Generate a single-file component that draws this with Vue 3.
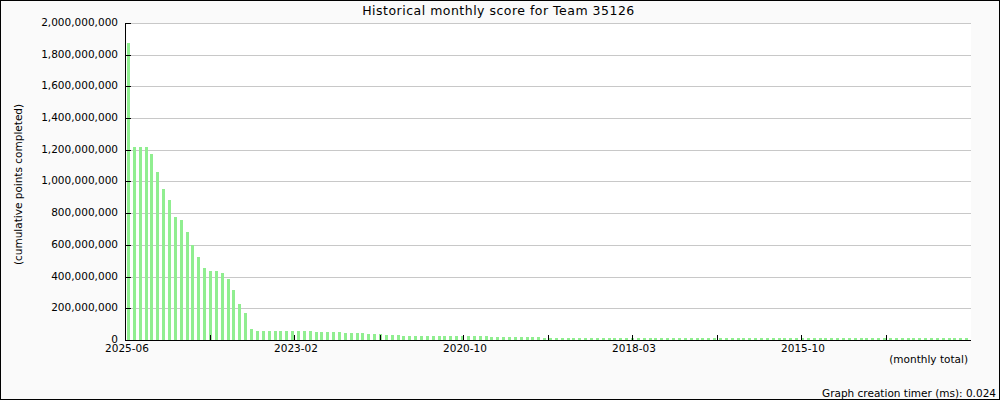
<script setup>
const head = [43,147,147,147,154,172,189,200,217,220,232,245,257,268,271,271,273,279,290,304,313,329]
const topFor = (i) => {
  if (i < head.length) return head[i]
  if (i < 32) return 331
  if (i < 37) return 332
  if (i < 41) return 333
  if (i < 44) return 334
  if (i < 47) return 335
  if (i < 62) return 336
  if (i < 71) return 337
  return 338
}
const bars = Array.from({ length: 144 }, (_, i) => ({
  x: Math.floor(127.5 + i * 5.861),
  y: topFor(i)
}))
const yTicks = [
  ['2,000,000,000', 23], ['1,800,000,000', 55], ['1,600,000,000', 86], ['1,400,000,000', 118],
  ['1,200,000,000', 150], ['1,000,000,000', 181], ['800,000,000', 213], ['600,000,000', 245],
  ['400,000,000', 277], ['200,000,000', 308]
]
const xTicks = [210, 294, 380, 463, 548, 632, 717, 801, 886]
const xLabels = [['2025-06', 127], ['2023-02', 296], ['2020-10', 465], ['2018-03', 634], ['2015-10', 803]]
</script>

<template>
  <svg class="chart" width="1000" height="400" viewBox="0 0 1000 400">
    <rect x="0.5" y="0.5" width="999" height="399" class="frame" />
    <rect x="126" y="23" width="845" height="317" fill="#fff" />
    <line v-for="t in yTicks" :key="t[0]" x1="126" x2="971" :y1="t[1] + 0.5" :y2="t[1] + 0.5" class="grid" />
    <rect v-for="(b, i) in bars" :key="i" :x="b.x" :y="b.y" width="3" :height="340 - b.y" fill="#90ee90" />
    <line v-for="t in yTicks" :key="'t' + t[0]" x1="126" x2="131" :y1="t[1] + 0.5" :y2="t[1] + 0.5" class="axis" />
    <line v-for="x in xTicks" :key="x" :x1="x + 0.5" :x2="x + 0.5" y1="335" y2="340" class="axis" />
    <line x1="125.5" x2="125.5" y1="23" y2="341" class="axis" />
    <line x1="125" x2="971" y1="340.5" y2="340.5" class="axis" />

    <text x="498.5" y="15" text-anchor="middle" class="title">Historical monthly score for Team 35126</text>
    <text v-for="t in yTicks" :key="'l' + t[0]" x="118" :y="t[1] + 3" text-anchor="end">{{ t[0] }}</text>
    <text x="118" y="343" text-anchor="end">0</text>
    <text v-for="l in xLabels" :key="l[0]" :x="l[1]" y="352" text-anchor="middle">{{ l[0] }}</text>
    <text x="968" y="362.5" text-anchor="end">(monthly total)</text>
    <text x="996" y="397" text-anchor="end">Graph creation timer (ms): 0.024</text>
    <text transform="translate(22 184.5) rotate(-90)" text-anchor="middle">(cumulative points completed)</text>
  </svg>
</template>

<style>
html, body { margin: 0; background: #fff; }
</style>

<style scoped>
.chart { display: block; }
.frame { fill: #fafafa; stroke: #000; stroke-width: 1; }
.grid { stroke: #c8c8c8; stroke-width: 1; }
.axis { stroke: #000; stroke-width: 1; }
text { font-family: "DejaVu Sans", sans-serif; font-size: 10.5px; fill: #000; }
.title { font-size: 12.5px; letter-spacing: 0.49px; }
</style>
